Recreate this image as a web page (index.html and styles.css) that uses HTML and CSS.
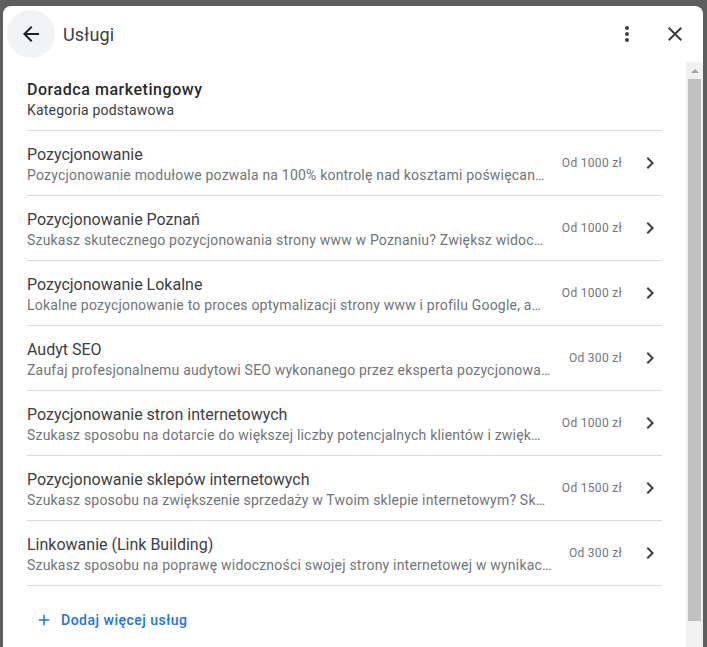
FILE: index.html
```html
<!DOCTYPE html>
<html lang="pl">
<head>
<meta charset="utf-8">
<title>Usługi</title>
<link rel="stylesheet" href="styles.css">
</head>
<body>
<div class="dialog">
  <header class="dlg-header">
    <button class="icon-btn back-btn" aria-label="Wstecz">
      <svg viewBox="0 0 24 24" width="24" height="24"><path d="M20 11H7.83l5.59-5.59L12 4l-8 8 8 8 1.41-1.41L7.83 13H20v-2z"/></svg>
    </button>
    <h1 class="dlg-title">Usługi</h1>
    <button class="icon-btn" aria-label="Więcej">
      <svg viewBox="0 0 24 24" width="24" height="24"><path d="M12 8c1.1 0 2-.9 2-2s-.9-2-2-2-2 .9-2 2 .9 2 2 2zm0 2c-1.1 0-2 .9-2 2s.9 2 2 2 2-.9 2-2-.9-2-2-2zm0 6c-1.1 0-2 .9-2 2s.9 2 2 2 2-.9 2-2-.9-2-2-2z"/></svg>
    </button>
    <button class="icon-btn" aria-label="Zamknij">
      <svg viewBox="0 0 24 24" width="24" height="24"><path d="M19 6.41L17.59 5 12 10.59 6.41 5 5 6.41 10.59 12 5 17.59 6.41 19 12 13.41 17.59 19 19 17.59 13.41 12z"/></svg>
    </button>
  </header>
  <div class="dlg-body">
    <div class="content">
      <div class="category">
        <div class="cat-name">Doradca marketingowy</div>
        <div class="cat-sub">Kategoria podstawowa</div>
      </div>
      <ul class="services">
        <li class="service">
          <div class="svc-text">
            <div class="svc-title">Pozycjonowanie</div>
            <div class="svc-desc">Pozycjonowanie modułowe pozwala na 100% kontrolę nad kosztami poświęcanymi na pozycjonowanie strony</div>
          </div>
          <div class="svc-price">Od 1000 zł</div>
          <svg class="chev" viewBox="0 0 24 24" width="24" height="24"><path d="M10 6L8.59 7.41 13.17 12l-4.58 4.59L10 18l6-6z"/></svg>
        </li>
        <li class="service">
          <div class="svc-text">
            <div class="svc-title">Pozycjonowanie Poznań</div>
            <div class="svc-desc">Szukasz skutecznego pozycjonowania strony www w Poznaniu? Zwiększ widoczność swojej firmy</div>
          </div>
          <div class="svc-price">Od 1000 zł</div>
          <svg class="chev" viewBox="0 0 24 24" width="24" height="24"><path d="M10 6L8.59 7.41 13.17 12l-4.58 4.59L10 18l6-6z"/></svg>
        </li>
        <li class="service">
          <div class="svc-text">
            <div class="svc-title">Pozycjonowanie Lokalne</div>
            <div class="svc-desc">Lokalne pozycjonowanie to proces optymalizacji strony www i profilu Google, aby firma była widoczna</div>
          </div>
          <div class="svc-price">Od 1000 zł</div>
          <svg class="chev" viewBox="0 0 24 24" width="24" height="24"><path d="M10 6L8.59 7.41 13.17 12l-4.58 4.59L10 18l6-6z"/></svg>
        </li>
        <li class="service">
          <div class="svc-text">
            <div class="svc-title">Audyt SEO</div>
            <div class="svc-desc">Zaufaj profesjonalnemu audytowi SEO wykonanego przez eksperta pozycjonowania stron</div>
          </div>
          <div class="svc-price">Od 300 zł</div>
          <svg class="chev" viewBox="0 0 24 24" width="24" height="24"><path d="M10 6L8.59 7.41 13.17 12l-4.58 4.59L10 18l6-6z"/></svg>
        </li>
        <li class="service">
          <div class="svc-text">
            <div class="svc-title">Pozycjonowanie stron internetowych</div>
            <div class="svc-desc">Szukasz sposobu na dotarcie do większej liczby potencjalnych klientów i zwiększenie sprzedaży?</div>
          </div>
          <div class="svc-price">Od 1000 zł</div>
          <svg class="chev" viewBox="0 0 24 24" width="24" height="24"><path d="M10 6L8.59 7.41 13.17 12l-4.58 4.59L10 18l6-6z"/></svg>
        </li>
        <li class="service">
          <div class="svc-text">
            <div class="svc-title">Pozycjonowanie sklepów internetowych</div>
            <div class="svc-desc">Szukasz sposobu na zwiększenie sprzedaży w Twoim sklepie internetowym? Skorzystaj z pozycjonowania</div>
          </div>
          <div class="svc-price">Od 1500 zł</div>
          <svg class="chev" viewBox="0 0 24 24" width="24" height="24"><path d="M10 6L8.59 7.41 13.17 12l-4.58 4.59L10 18l6-6z"/></svg>
        </li>
        <li class="service">
          <div class="svc-text">
            <div class="svc-title">Linkowanie (Link Building)</div>
            <div class="svc-desc">Szukasz sposobu na poprawę widoczności swojej strony internetowej w wynikach wyszukiwania?</div>
          </div>
          <div class="svc-price">Od 300 zł</div>
          <svg class="chev" viewBox="0 0 24 24" width="24" height="24"><path d="M10 6L8.59 7.41 13.17 12l-4.58 4.59L10 18l6-6z"/></svg>
        </li>
      </ul>
      <div class="add-wrap">
        <button class="add-btn">
          <svg viewBox="0 0 24 24" width="18" height="18"><path d="M19 13h-6v6h-2v-6H5v-2h6V5h2v6h6v2z"/></svg>
          <span>Dodaj więcej usług</span>
        </button>
      </div>
    </div>
    <div class="scrollbar">
      <div class="sb-arrow"><span class="sb-tri"></span></div>
      <div class="sb-thumb"></div>
    </div>
  </div>
</div>
</body>
</html>
```

FILE: styles.css
```css
* { box-sizing: border-box; }

html, body {
  margin: 0;
  height: 647px;
  overflow: hidden;
}

body {
  background: #5e5e5e;
  font-family: Roboto, "Noto Sans", Arial, sans-serif;
  color: #202124;
}

.dialog {
  margin: 6px 0 0 3px;
  width: 700px;
  height: 680px;
  background: #fff;
  border-radius: 8px 8px 0 0;
  display: flex;
  flex-direction: column;
}

.dlg-header {
  display: flex;
  align-items: center;
  padding: 4px;
  height: 56px;
  flex: none;
}

.icon-btn {
  width: 48px;
  height: 48px;
  border: 0;
  padding: 0;
  background: transparent;
  border-radius: 50%;
  display: flex;
  align-items: center;
  justify-content: center;
  flex: none;
}

.icon-btn svg { fill: #3c4043; }

.back-btn { background: #f1f3f4; }
.back-btn svg { fill: #202124; }

.dlg-title {
  flex: 1;
  margin: 0 0 0 8px;
  font-size: 18px;
  font-weight: 400;
  color: #3c4043;
  letter-spacing: 0.2px;
}

.dlg-body {
  flex: 1;
  display: flex;
  min-height: 0;
}

.content {
  flex: 1;
  min-width: 0;
  padding: 0 24px;
}

.category {
  padding: 18px 0 10px;
  border-bottom: 1px solid #dadce0;
}

.cat-name {
  font-size: 16px;
  font-weight: 500;
  line-height: 20px;
  letter-spacing: 0.55px;
  color: #282a2d;
}

.cat-sub {
  font-size: 14px;
  line-height: 20px;
  letter-spacing: 0.2px;
  color: #3c4043;
}

.services {
  list-style: none;
  margin: 0;
  padding: 0;
}

.service {
  display: flex;
  align-items: center;
  gap: 16px;
  height: 65px;
  border-bottom: 1px solid #dadce0;
}

.svc-text {
  flex: 1;
  min-width: 0;
  padding-top: 3px;
}

.svc-title {
  font-size: 16px;
  line-height: 20px;
  color: #3c4043;
  white-space: nowrap;
}

.svc-desc {
  font-size: 14px;
  line-height: 20px;
  letter-spacing: 0.2px;
  color: #70757a;
  white-space: nowrap;
  overflow: hidden;
  text-overflow: ellipsis;
}

.svc-price {
  flex: none;
  font-size: 12px;
  letter-spacing: 0.3px;
  color: #70757a;
}

.chev {
  flex: none;
  fill: #3c4043;
}

.add-wrap {
  padding-top: 16px;
}

.add-btn {
  display: flex;
  align-items: center;
  gap: 8px;
  height: 36px;
  padding: 0 8px;
  border: 0;
  background: transparent;
  font-family: inherit;
  font-size: 14px;
  font-weight: 500;
  letter-spacing: 0.5px;
  color: #1a73e8;
}

.add-btn svg { fill: #1a73e8; }

.scrollbar {
  width: 17px;
  flex: none;
  background: #f1f1f1;
  display: flex;
  flex-direction: column;
  align-items: center;
}

.sb-arrow {
  height: 17px;
  width: 17px;
  display: flex;
  align-items: center;
  justify-content: center;
}

.sb-tri {
  width: 0;
  height: 0;
  border-left: 4px solid transparent;
  border-right: 4px solid transparent;
  border-bottom: 4px solid #a3a3a3;
}

.sb-thumb {
  width: 13px;
  height: 542px;
  background: #c1c1c1;
}
```
